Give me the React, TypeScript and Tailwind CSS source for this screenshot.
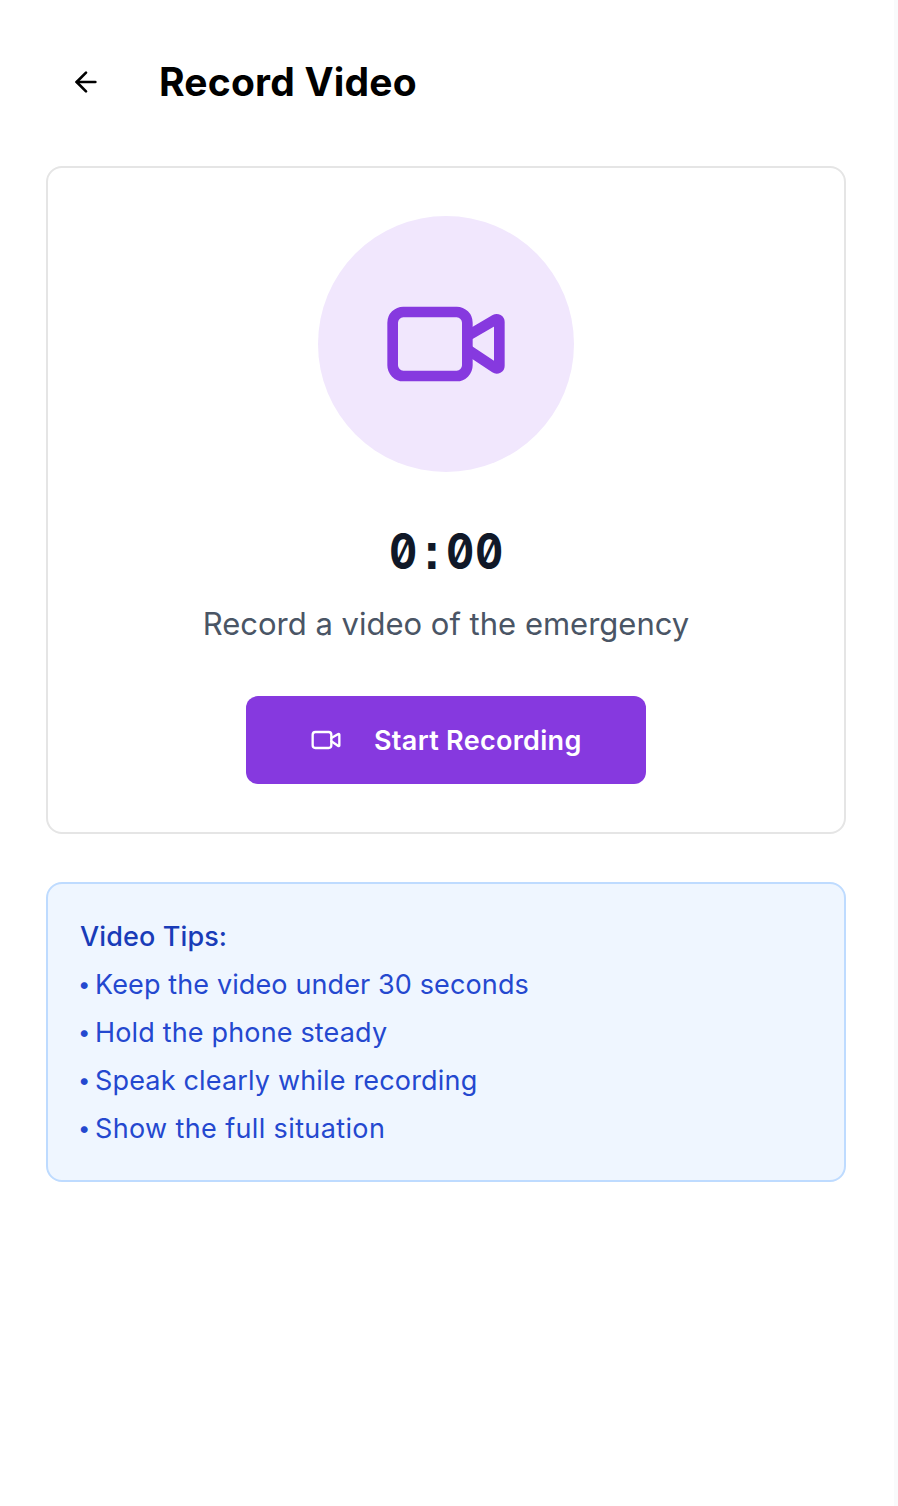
import React from 'react';

type IconProps = { className?: string; strokeWidth?: number };

function VideoIcon({ className, strokeWidth = 2 }: IconProps) {
  return (
    <svg className={className} viewBox="0 0 24 24" fill="none" stroke="currentColor" strokeWidth={strokeWidth} strokeLinecap="round" strokeLinejoin="round">
      <path d="m16 13 5.223 3.482a.5.5 0 0 0 .777-.416V7.87a.5.5 0 0 0-.752-.432L16 10.5" />
      <rect x="2" y="6" width="14" height="12" rx="2" />
    </svg>
  );
}

function ArrowLeftIcon({ className }: IconProps) {
  return (
    <svg className={className} viewBox="0 0 24 24" fill="none" stroke="currentColor" strokeWidth="2" strokeLinecap="round" strokeLinejoin="round">
      <path d="m12 19-7-7 7-7" />
      <path d="M19 12H5" />
    </svg>
  );
}

const tips = [
  { text: 'Keep the video under 30 seconds', spacing: 'tracking-[0.12px]' },
  { text: 'Hold the phone steady', spacing: 'tracking-[0.16px]' },
  { text: 'Speak clearly while recording', spacing: 'tracking-[0.17px]' },
  { text: 'Show the full situation', spacing: 'tracking-[0.37px]' },
];

export default function App() {
  return (
    <div className="flex min-h-[1506px] w-full bg-gray-50 font-['Inter','Liberation_Sans',sans-serif]">
      <main className="w-[894px] shrink-0 bg-white pt-[42px] pr-12 pl-[46px]">
        <header className="flex h-20 items-center">
          <button type="button" aria-label="Back" className="flex h-20 w-20 items-center justify-center text-black">
            <ArrowLeftIcon className="size-8" />
          </button>
          <h1 className="ml-[33px] text-[39px] leading-[56px] font-[650] whitespace-nowrap text-black tracking-[0.2px]">Record Video</h1>
        </header>

        <section className="mt-11 flex h-[668px] flex-col items-center rounded-2xl border-2 border-[#e5e5e5] bg-white pt-12">
          <div className="flex size-64 items-center justify-center rounded-full bg-[#f1e7fd] text-[#8639df]">
            <VideoIcon className="size-32" />
          </div>
          <div className="mt-[47px] flex h-16 items-center text-[50px] leading-[64px] font-bold text-[#101828] [font-feature-settings:'zero','ss07','tnum']">
            {'0:00'.split('').map((c, i) => (
              <span key={i} className="flex w-[28.8px] justify-center">
                <span className={c === ':' ? 'inline-block scale-x-[0.9]' : 'inline-block scale-x-[0.86]'}>{c}</span>
              </span>
            ))}
          </div>
          <p className="mt-[17px] text-[31px] leading-[48px] font-[430] whitespace-nowrap text-[#4a5565]">Record a video of the emergency</p>
          <button type="button" className="mt-12 flex h-[88px] w-[400px] items-center rounded-xl bg-[#8639df] pl-16 text-white">
            <VideoIcon className="size-8" strokeWidth={1.75} />
            <span className="ml-8 pt-0.5 text-[27px] leading-10 font-semibold whitespace-nowrap tracking-[0.3px]">Start Recording</span>
          </button>
        </section>

        <section className="mt-12 h-[300px] rounded-2xl border-2 border-[#bedbff] bg-[#eff6ff] px-8 pt-[33px] text-[27px] leading-10 font-[430] text-[#2448cf]">
          <h2 className="font-[550] tracking-[0.12px] text-[#193cb8]">Video Tips:</h2>
          <ul className="mt-2 flex flex-col gap-2">
            {tips.map((tip) => (
              <li key={tip.text} className="flex items-center whitespace-nowrap">
                <span className="-ml-0.5 w-[17px] pb-0.5 text-[22px] leading-[38px]">•</span>
                <span className={tip.spacing}>{tip.text}</span>
              </li>
            ))}
          </ul>
        </section>
      </main>
    </div>
  );
}
